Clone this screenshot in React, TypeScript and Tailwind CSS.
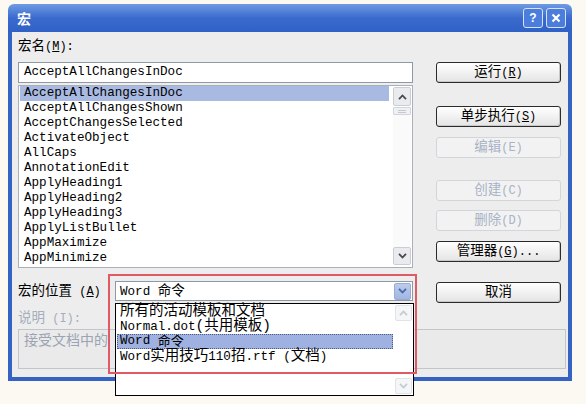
import React from "react";

const items = [
  "AcceptAllChangesInDoc",
  "AcceptAllChangesShown",
  "AcceptChangesSelected",
  "ActivateObject",
  "AllCaps",
  "AnnotationEdit",
  "ApplyHeading1",
  "ApplyHeading2",
  "ApplyHeading3",
  "ApplyListBullet",
  "AppMaximize",
  "AppMinimize",
];

function Up({ color }: { color: string }) {
  return (
    <svg width="9" height="6" viewBox="0 0 9 6">
      <path d="M1 5.2 L4.5 1.5 L8 5.2" stroke={color} strokeWidth="1.8" fill="none" />
    </svg>
  );
}
function Down({ color }: { color: string }) {
  return (
    <svg width="9" height="6" viewBox="0 0 9 6">
      <path d="M1 0.8 L4.5 4.5 L8 0.8" stroke={color} strokeWidth="1.8" fill="none" />
    </svg>
  );
}

function Btn({ cn, asc, disabled, mt }: { cn: string; asc?: React.ReactNode; disabled?: boolean; mt: string }) {
  return (
    <div
      className={
        disabled
          ? `${mt} h-[21px] w-[125px] rounded-[3px] border border-[#d2d6db] bg-[#f2f2f2] text-[#a8b3c6] flex items-center justify-center`
          : `${mt} h-[21px] w-[125px] rounded-[3px] border border-[#2b2b2b] bg-linear-to-b from-white to-[#e4e4e4] text-black flex items-center justify-center shadow-[inset_-1px_-1px_0_#c8c8c8]`
      }
    >
      <span className="text-[13.5px] leading-[16px]">{cn}</span>
      {asc ? <span className="text-[12px] leading-[16px]">{asc}</span> : null}
    </div>
  );
}

export default function App() {
  return (
    <div className="relative w-[586px] h-[404px] overflow-hidden bg-[#fbf9f2] font-['Liberation_Mono','Noto_Sans_CJK_SC',monospace] text-black">
      <div className="ml-[8px] mt-[4px] w-[564px] h-[377px] flex flex-col">
        {/* title bar */}
        <div className="h-[28px] rounded-t-[6px] bg-linear-to-b from-[#6f9be3] via-[#3a6acd] to-[#3061c6] flex items-center pl-[9px] pr-[6px]">
          <span className="text-white font-bold text-[14px] font-['Noto_Sans_CJK_SC',sans-serif] leading-[16px]">宏</span>
          <div className="ml-auto flex gap-[3px]">
            <div className="w-[20px] h-[20px] rounded-[3px] border border-[#d6e2f6] bg-[#4a7ddc] flex items-center justify-center text-white font-bold text-[12px] font-['Liberation_Sans',sans-serif]">
              ?
            </div>
            <div className="w-[20px] h-[20px] rounded-[3px] border border-[#d6e2f6] bg-[#4a7ddc] flex items-center justify-center">
              <svg width="10" height="10" viewBox="0 0 10 10">
                <path d="M1.5 1.5 L8.5 8.5 M8.5 1.5 L1.5 8.5" stroke="white" strokeWidth="2.2" />
              </svg>
            </div>
          </div>
        </div>
        {/* body */}
        <div className="flex-1 bg-[#ededed] border-x-4 border-b-4 border-[#3463c4] pt-[7px] pl-[6px]">
          <div className="flex gap-[23px]">
            <div className="w-[395px] flex flex-col">
              <div className="h-[16px] leading-[16px] flex items-end">
                <span className="text-[13.5px]">宏名</span>
                <span className="text-[12px]">
                  {" "}(<u>M</u>):
                </span>
              </div>
              <div className="mt-[7px] h-[21px] border border-[#9098a4] bg-white pl-[5px] flex items-center text-[12.6px]">
                AcceptAllChangesInDoc
              </div>
              <div className="mt-[2px] h-[183px] border border-[#a9b0b9] bg-white flex">
                <div className="flex-1 pl-[1px] pr-[4px]">
                  {items.map((it, i) => (
                    <div
                      key={it}
                      className={
                        i === 0
                          ? "h-[15px] leading-[15px] pl-[4px] text-[12.6px] bg-[#a8b9e2]"
                          : "h-[15px] leading-[15px] pl-[4px] text-[12.6px]"
                      }
                    >
                      {it}
                    </div>
                  ))}
                </div>
                <div className="w-[18px] mr-[1px] flex flex-col pt-[1px] pb-[2px]">
                  <div className="h-[19px] rounded-[2px] border border-[#c9ced6] bg-[#e9ebef] flex items-center justify-center">
                    <Up color="#4a4a4a" />
                  </div>
                  <div className="mt-[1px] h-[8px] rounded-[1px] border border-[#d2d6dc] bg-[#eef0f3] flex flex-col justify-center gap-[1px] px-[4px]">
                    <div className="h-px bg-[#c5c9cf]" />
                    <div className="h-px bg-[#c5c9cf]" />
                  </div>
                  <div className="flex-1 bg-[#fafafa]" />
                  <div className="h-[18px] rounded-[2px] border border-[#c9ced6] bg-[#e9ebef] flex items-center justify-center">
                    <Down color="#4a4a4a" />
                  </div>
                </div>
              </div>
            </div>
            <div className="w-[125px] flex flex-col">
              <Btn mt="mt-[23px]" cn="运行" asc={<> (<u>R</u>)</>} />
              <Btn mt="mt-[23px]" cn="单步执行" asc={<> (<u>S</u>)</>} />
              <Btn mt="mt-[10px]" cn="编辑" asc={<> (E)</>} disabled />
              <Btn mt="mt-[22px]" cn="创建" asc={<> (C)</>} disabled />
              <Btn mt="mt-[9px]" cn="删除" asc={<> (D)</>} disabled />
              <Btn mt="mt-[10px]" cn="管理器" asc={<> (<u>G</u>)...</>} />
            </div>
          </div>
          {/* row 2 */}
          <div className="mt-[13px] h-[22px] flex gap-[23px] items-start">
            <div className="w-[395px] h-[20px] flex items-center">
              <div className="w-[97px] leading-[16px]">
                <span className="text-[13.5px]">宏的位置</span>
                <span className="text-[12px]">
                  {" "}(<u>A</u>)
                </span>
              </div>
              <div className="w-[298px] h-[20px] border border-[#9098a4] bg-white flex items-center">
                <div className="flex-1 pl-[4px] leading-[16px]">
                  <span className="text-[12.6px]">Word </span>
                  <span className="text-[13.5px]">命令</span>
                </div>
                <div className="w-[17px] h-[17px] mr-[1px] rounded-[2px] border border-[#95abd8] bg-linear-to-b from-[#bccbec] to-[#a2b6e0] flex items-center justify-center">
                  <Down color="#4867a8" />
                </div>
              </div>
            </div>
            <Btn mt="mt-[1px]" cn="取消" />
          </div>
          <div className="mt-[7px] h-[16px] leading-[16px] text-[#a5aebb]">
            <span className="text-[13.5px]">说明</span>
            <span className="text-[12px]"> (I):</span>
          </div>
          <div className="mt-[3px] h-[40px] w-[548px] border border-[#c2c6cb] bg-[#eaeaea] pl-[5px] pt-[2px] text-[14px] leading-[18px] text-[#9aa4b4]">
            接受文档中的
          </div>
        </div>
      </div>

      {/* dropdown popup */}
      <div className="absolute left-[115px] top-[303px] w-[299px] h-[93px] border border-black bg-white flex">
        <div className="flex-1 pl-[1px] pr-[2px]">
          <div className="h-[15px] leading-[15px] pl-[3px] text-[14.5px]">所有的活动模板和文档</div>
          <div className="h-[15px] leading-[15px] pl-[3px]">
            <span className="text-[12.6px]">Normal.dot</span>
            <span className="text-[14.5px]">(共用模板)</span>
          </div>
          <div className="h-[15px] pl-[2px] bg-[#9eb1e0] border border-dotted border-[#4c5a80] flex items-center overflow-hidden">
            <span className="text-[12.6px] leading-[13px]">Word&nbsp;</span>
            <span className="text-[13px] leading-[13px]">命令</span>
          </div>
          <div className="h-[15px] leading-[15px] pl-[3px]">
            <span className="text-[12.6px]">Word</span>
            <span className="text-[14.5px]">实用技巧</span>
            <span className="text-[12.6px]">110</span>
            <span className="text-[14.5px]">招</span>
            <span className="text-[12.6px]">.rtf (</span>
            <span className="text-[14.5px]">文档</span>
            <span className="text-[12.6px]">)</span>
          </div>
        </div>
        <div className="w-[17px] mr-[1px] flex flex-col pt-[1px] pb-[1px]">
          <div className="h-[16px] rounded-[2px] border border-[#e0e3e7] bg-[#f5f6f8] flex items-center justify-center">
            <Up color="#c6cad1" />
          </div>
          <div className="flex-1" />
          <div className="h-[16px] rounded-[2px] border border-[#e0e3e7] bg-[#f5f6f8] flex items-center justify-center">
            <Down color="#c6cad1" />
          </div>
        </div>
      </div>

      {/* red highlight rectangle */}
      <div className="absolute left-[108px] top-[274px] w-[309px] h-[100px] border-2 border-[#e05a66] pointer-events-none" />
    </div>
  );
}
